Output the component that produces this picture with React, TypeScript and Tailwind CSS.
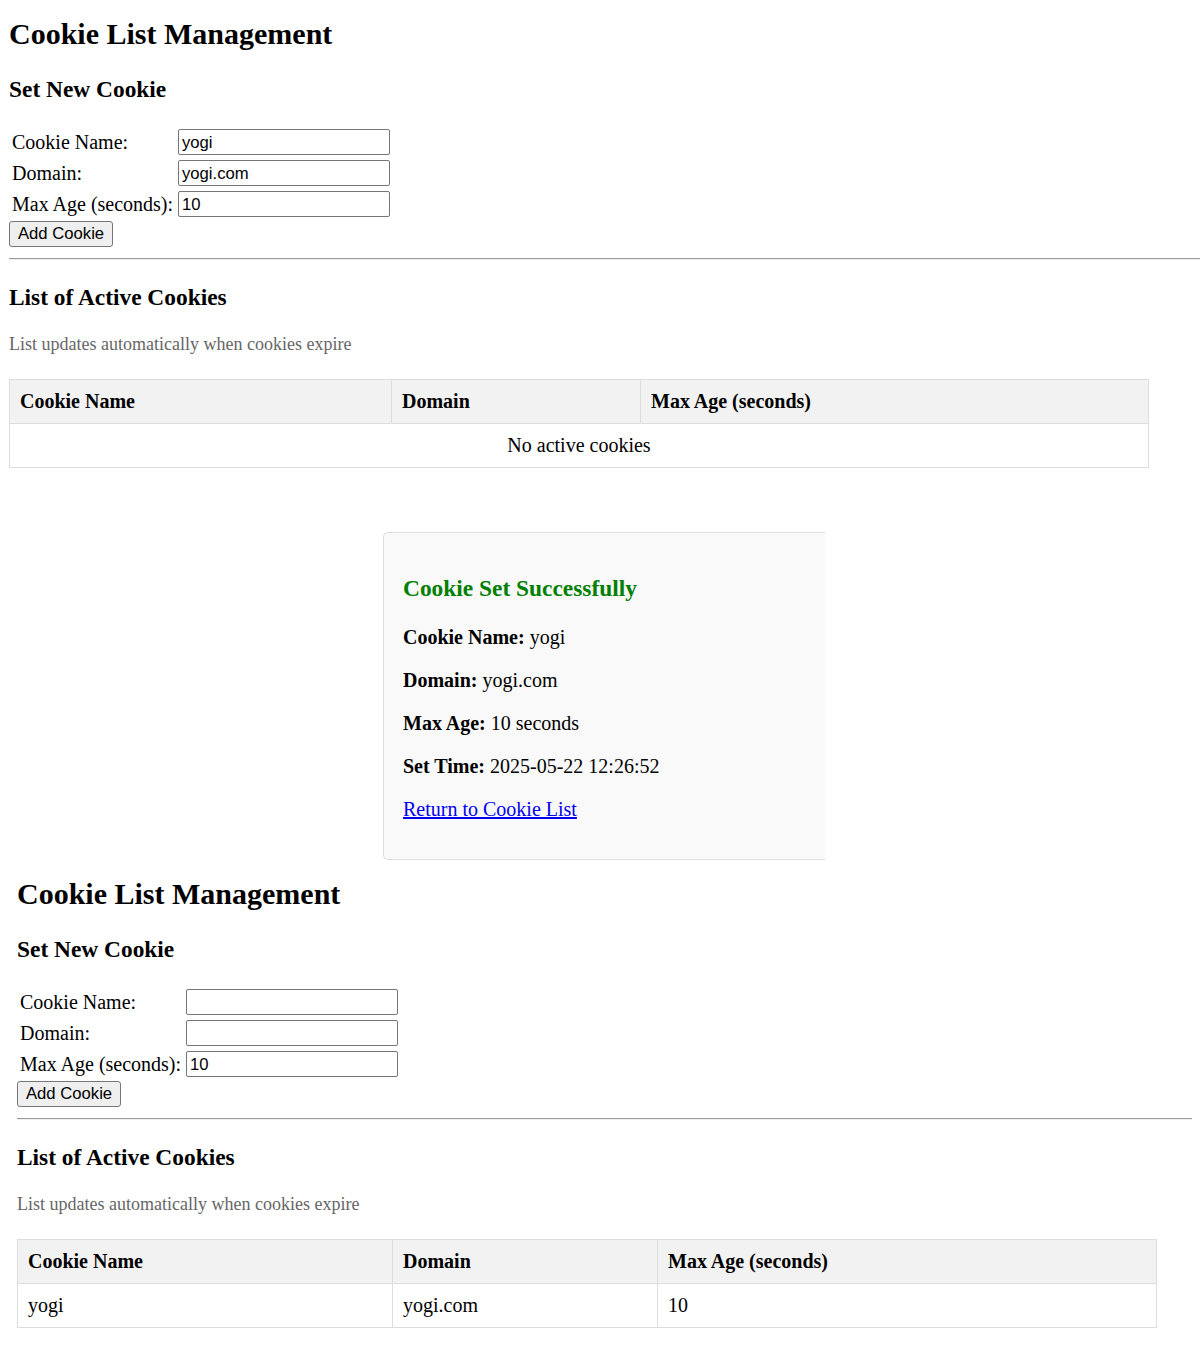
const serif = "font-['Liberation_Serif','Times_New_Roman',serif]";
const sans = "font-['Liberation_Sans',Arial,sans-serif]";

type Cookie = { name: string; domain: string; maxAge: string };

function FormRow({ label, value }: { label: string; value: string }) {
  return (
    <div className="grid h-[26px] grid-cols-[166px_212px] items-center">
      <label className="text-[20px] leading-[26px]">{label}</label>
      <input
        readOnly
        value={value}
        className={`${sans} h-[26px] w-[212px] rounded-[2px] border border-[#767676] bg-white pt-[1px] pl-[3px] text-[16.67px] text-black outline-none`}
      />
    </div>
  );
}

function CookieTable({
  cols,
  width,
  cookies,
}: {
  cols: string;
  width: string;
  cookies: Cookie[];
}) {
  return (
    <div className={`${width} border border-[#ddd] text-[20px] leading-[23px]`}>
      <div className={`grid ${cols} border-b border-[#ddd] bg-[#f2f2f2] font-bold`}>
        <div className="p-[10px]">Cookie Name</div>
        <div className="border-l border-[#ddd] p-[10px]">Domain</div>
        <div className="border-l border-[#ddd] p-[10px]">Max Age (seconds)</div>
      </div>
      {cookies.length === 0 ? (
        <div className="p-[10px] text-center">No active cookies</div>
      ) : (
        cookies.map((c) => (
          <div key={c.name} className={`grid ${cols}`}>
            <div className="p-[10px]">{c.name}</div>
            <div className="border-l border-[#ddd] p-[10px]">{c.domain}</div>
            <div className="border-l border-[#ddd] p-[10px]">{c.maxAge}</div>
          </div>
        ))
      )}
    </div>
  );
}

function CookiePage({
  className,
  form,
  cookies,
  cols,
  width,
}: {
  className: string;
  form: Cookie;
  cookies: Cookie[];
  cols: string;
  width: string;
}) {
  return (
    <section className={`${className} pt-[17px]`}>
      <h1 className="text-[30px] font-bold leading-[34px]">Cookie List Management</h1>
      <h3 className="mt-[25px] text-[23.4px] font-bold leading-[27px]">Set New Cookie</h3>
      <div className="mt-[26px] ml-[3px] flex flex-col gap-[5px]">
        <FormRow label="Cookie Name:" value={form.name} />
        <FormRow label="Domain:" value={form.domain} />
        <FormRow label="Max Age (seconds):" value={form.maxAge} />
      </div>
      <button
        className={`${sans} mt-[4px] h-[26px] rounded-[3px] border border-[#767676] bg-[#efefef] px-[8px] text-[16.67px] leading-[24px] text-black`}
      >
        Add Cookie
      </button>
      <hr className="mt-[11px] border-t border-b border-t-[#9a9a9a] border-b-[#eeeeee]" />
      <h3 className="mt-[24px] text-[23.4px] font-bold leading-[27px]">List of Active Cookies</h3>
      <p className="mt-[23px] text-[18px] leading-[21px] text-[#666]">
        List updates automatically when cookies expire
      </p>
      <div className="mt-[24px]">
        <CookieTable cols={cols} width={width} cookies={cookies} />
      </div>
    </section>
  );
}

export default function App() {
  const yogi: Cookie = { name: "yogi", domain: "yogi.com", maxAge: "10" };

  return (
    <div className={`${serif} min-h-[1370px] bg-white text-black`}>
      <CookiePage
        className="pl-[9px]"
        form={yogi}
        cookies={[]}
        cols="grid-cols-[381px_249px_508px]"
        width="w-[1140px]"
      />

      <div className="mt-[64px] ml-[383px] h-[328px] w-[442px] rounded-l-[5px] border border-r-0 border-[#ddd] bg-[#f9f9f9] pt-[42px] pl-[19px]">
        <h3 className="text-[23.4px] font-bold leading-[27px] text-[#008000]">
          Cookie Set Successfully
        </h3>
        <div className="mt-[24px] flex flex-col gap-[20px] text-[20px] leading-[23px]">
          <p>
            <strong>Cookie Name:</strong> yogi
          </p>
          <p>
            <strong>Domain:</strong> yogi.com
          </p>
          <p>
            <strong>Max Age:</strong> 10 seconds
          </p>
          <p>
            <strong>Set Time:</strong> 2025-05-22 12:26:52
          </p>
          <p>
            <a href="#" className="text-[#0000ee] underline">
              Return to Cookie List
            </a>
          </p>
        </div>
      </div>

      <CookiePage
        className="pl-[17px] pr-[8px]"
        form={{ name: "", domain: "", maxAge: "10" }}
        cookies={[yogi]}
        cols="grid-cols-[374px_265px_499px]"
        width="w-[1140px]"
      />
    </div>
  );
}
